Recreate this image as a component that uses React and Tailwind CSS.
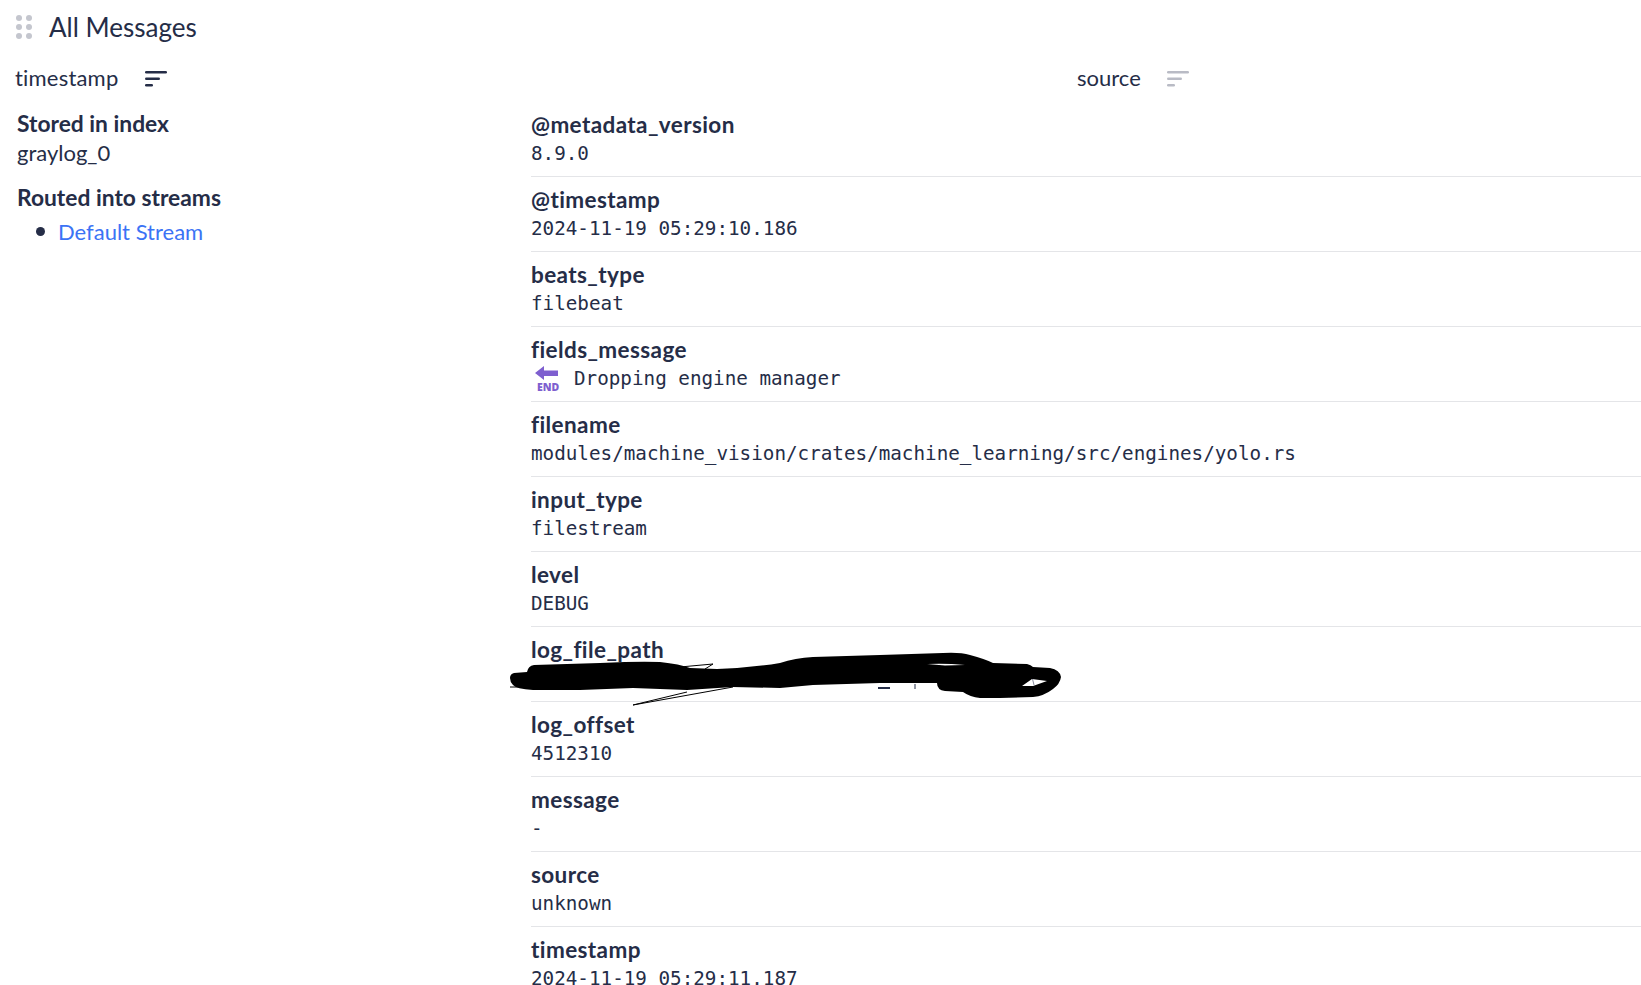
import React from 'react';

const fields = [
  ['@metadata_version', '8.9.0'],
  ['@timestamp', '2024-11-19 05:29:10.186'],
  ['beats_type', 'filebeat'],
  ['fields_message', 'Dropping engine manager', true],
  ['filename', 'modules/machine_vision/crates/machine_learning/src/engines/yolo.rs'],
  ['input_type', 'filestream'],
  ['level', 'DEBUG'],
  ['log_file_path', '\u00a0'],
  ['log_offset', '4512310'],
  ['message', '-'],
  ['source', 'unknown'],
  ['timestamp', '2024-11-19 05:29:11.187'],
];

const SortIcon = ({ className }) => (
  <svg viewBox="0 0 22 16" className={`w-[22px] h-[16px] ${className}`} fill="currentColor">
    <rect x="0" y="0" width="22" height="2.6" rx="1.3" />
    <rect x="0" y="6.5" width="15" height="2.6" rx="1.3" />
    <rect x="0" y="13" width="8" height="2.6" rx="1.3" />
  </svg>
);

const DragHandle = () => (
  <svg viewBox="0 0 16 24" className="w-[16px] h-[24px] text-[#c4c6ce]" fill="currentColor">
    <circle cx="3" cy="3" r="3" />
    <circle cx="13" cy="3" r="3" />
    <circle cx="3" cy="12" r="3" />
    <circle cx="13" cy="12" r="3" />
    <circle cx="3" cy="21" r="3" />
    <circle cx="13" cy="21" r="3" />
  </svg>
);

const EndArrow = () => (
  <svg viewBox="0 0 24 26" className="w-[24px] h-[26px] overflow-visible text-[#7e5fcf]" fill="currentColor">
    <path d="M0 7 L9 0 V4.5 H23 V10 H9 V14 Z" />
    <text x="2" y="25" fontSize="10.5" fontWeight="800" fontFamily="'Open Sans', sans-serif">END</text>
  </svg>
);

// scribble that blacks out the log_file_path value, in page coordinates
const Scribble = () => (
  <svg viewBox="500 640 580 80" className="absolute left-[500px] top-[640px] w-[580px] h-[80px]" fill="none">
    <path d="M510 687 H527 M680 667 L713 664 L705 669 M687 692 L633 705 L733 687" stroke="black" strokeWidth="1" />
    <path d="M878 688 H890" stroke="#252d47" strokeWidth="2" />
    <path d="M915 684 V689" stroke="#252d47" strokeWidth="1" />
    <path
      fillRule="evenodd"
      fill="black"
      d="M510 678 Q510 674 514 673 L527 672 Q528 666 534 665 L600 663 Q640 661 660 662 Q680 664 690 668 L717 669 Q750 668 780 663 Q795 658 813 657 L880 655 L943 653 Q960 652 970 655 Q985 659 993 663 L1027 664 Q1031 665 1033 667 L1050 668 Q1060 670 1061 677 Q1060 684 1053 689 Q1044 696 1033 697 L1000 698 L980 698 Q970 697 963 692 L945 691 Q937 690 937 683 L880 683 L813 685 L780 688 L733 687 L687 690 L633 688 L580 690 L533 690 Q516 689 513 685 Q510 682 510 678 Z
         M1022 686 L1032 679 L1047 681 L1033 686 Z
         M927 664 Q945 663 965 665 L945 665.4 Z"
    />
    <path d="M1032.5 679 L1034 685" stroke="#6b7088" strokeWidth="0.8" />
  </svg>
);

const App = () => {
  return (
    <div className="relative h-[985px] overflow-hidden bg-white text-[#252d47] font-['Lato','Open_Sans',sans-serif] [font-variant-ligatures:none]">
      <div className="flex items-center h-[28px] mt-[13px] pl-[16px]">
        <DragHandle />
        <h2 className="ml-[17px] text-[26px] leading-[28px]">All Messages</h2>
      </div>

      <div className="flex items-center h-[28px] mt-[24px] text-[22px] leading-[26px]">
        <div className="flex items-center w-[1077px] pl-[15px]">
          <span className="tracking-[0.2px] pb-[2px]">timestamp</span>
          <SortIcon className="ml-[27px] text-[#252d47]" />
        </div>
        <div className="flex items-center">
          <span className="pb-[2px]">source</span>
          <SortIcon className="ml-[26px] text-[#b9bbc5]" />
        </div>
      </div>

      <div className="flex mt-[9px]">
        <aside className="w-[531px] flex-shrink-0 pl-[17px] pt-[7px] text-[22px] leading-[29px]">
          <div className="font-bold text-[22.8px]">Stored in index</div>
          <div>graylog_0</div>
          <div className="font-bold text-[22.8px] mt-[16px]">Routed into streams</div>
          <ul className="mt-[5px]">
            <li className="flex items-center">
              <span className="w-[9px] h-[9px] rounded-full bg-[#252d47] ml-[19px] mr-[13px]" />
              <a href="#" className="text-[#3b73f5]">Default Stream</a>
            </li>
          </ul>
        </aside>

        <dl className="flex-1">
          {fields.map(([key, value, emoji]) => (
            <div key={key} className="h-[75px] border-b border-[#e4e5e8] pt-[9px]">
              <dt className="font-bold text-[22.5px] tracking-[0.4px] leading-[28px]">{key}</dt>
              <dd className="font-['DejaVu_Sans_Mono',monospace] text-[19.26px] leading-[29px] flex items-center">
                {emoji && (
                  <span className="flex w-[43px] pl-[4px]">
                    <EndArrow />
                  </span>
                )}
                {value}
              </dd>
            </div>
          ))}
        </dl>
      </div>

      <Scribble />
    </div>
  );
};

export default App;
